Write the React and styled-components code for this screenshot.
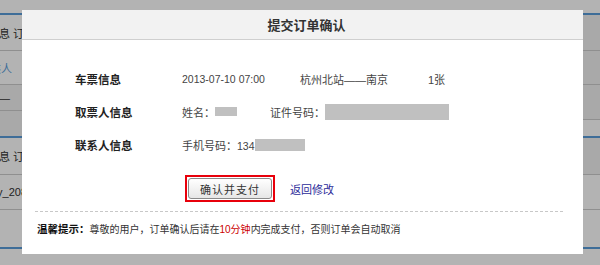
import React from 'react';
import styled, { createGlobalStyle } from 'styled-components';

const GlobalStyle = createGlobalStyle`
  html, body {
    margin: 0;
    padding: 0;
    background: #b3b3b3;
  }
  body {
    font-family: "Liberation Sans", "Noto Sans CJK SC", sans-serif;
    color: #333;
  }
`;

const Page = styled.div`
  display: flex;
  width: 600px;
  height: 265px;
  overflow: hidden;
`;

const Strip = styled.div`
  width: ${p => p.width}px;
  flex-shrink: 0;
  display: flex;
  flex-direction: column;
  overflow: hidden;
`;

const StripRow = styled.div`
  height: ${p => p.h}px;
  flex-shrink: 0;
  box-sizing: border-box;
  border-bottom: ${p => (p.blue ? '2px solid #3e6d98' : '1px solid #8f8f8f')};
  background: ${p => (p.dark ? '#a9a9a9' : '#b3b3b3')};
  display: flex;
  align-items: center;
  white-space: nowrap;
  font-size: 11px;
  color: ${p => (p.link ? '#3e6d98' : '#222')};
  text-indent: ${p => p.indent || 0}px;
`;

const Dialog = styled.div`
  width: 561px;
  height: 244px;
  margin-top: 10px;
  flex-shrink: 0;
  background: #fff;
  display: flex;
  flex-direction: column;
`;

const Header = styled.div`
  height: 29px;
  flex-shrink: 0;
  background: #f2f2f2;
  border-bottom: 1px solid #cfcfcf;
  display: flex;
  align-items: center;
  justify-content: center;
  padding-left: 8px;
  font-size: 13px;
  font-weight: bold;
  color: #333;
`;

const Body = styled.div`
  padding: 22px 0 0 53px;
`;

const Row = styled.div`
  height: 33px;
  display: flex;
  align-items: center;
  font-size: 11px;
  color: #444;
`;

const Label = styled.div`
  width: 107px;
  font-size: 11.5px;
  font-weight: bold;
  color: #222;
`;

const Value = styled.span`
  margin-right: ${p => p.gap || 0}px;
  font-size: ${p => (p.num ? '10.5px' : '11px')};
  white-space: nowrap;
`;

const Masked = styled.span`
  display: inline-block;
  width: ${p => p.w}px;
  height: ${p => p.h}px;
  background: #c0c0c0;
  margin-right: ${p => p.gap || 0}px;
`;

const Actions = styled.div`
  display: flex;
  align-items: center;
  margin: 14px 0 0 163px;
`;

const Outline = styled.div`
  border: 2px solid #e8000b;
  padding: 1px;
`;

const Button = styled.button`
  width: 84px;
  height: 21px;
  box-sizing: border-box;
  border: 1px solid #8a8a8a;
  border-radius: 3px;
  background: linear-gradient(#ffffff, #e6e6e6);
  font-family: inherit;
  font-size: 11px;
  color: #333;
  padding: 0;
  letter-spacing: 1px;
  display: block;
`;

const BackLink = styled.a`
  margin-left: 15px;
  font-size: 11px;
  color: #2b2b99;
  text-decoration: none;
`;

const Divider = styled.div`
  margin: 9px 20px 0 13px;
  border-top: 1px dashed #c8c8c8;
`;

const Tip = styled.div`
  padding: 9px 0 0 15px;
  font-size: 10px;
  color: #333;
  white-space: nowrap;
`;

const TipTitle = styled.b`
  color: #111;
  font-size: 10.5px;
`;

const Hot = styled.span`
  color: #cc0000;
`;

const leftRows = [
  { h: 15, blue: true },
  { h: 36, text: '信息  订单', indent: -12 },
  { h: 34, text: '乘人', indent: -10, link: true },
  { h: 26, text: '——', indent: -12, dark: true },
  { h: 27, blue: true, dark: true },
  { h: 37, text: '信息  订单', indent: -12 },
  { h: 35, text: 'ty_2086', indent: -6 },
  { h: 39, blue: true },
  { h: 30 },
];

const rightRows = [
  { h: 15, blue: true },
  { h: 36, dark: true },
  { h: 34, dark: true },
  { h: 35, dark: true },
  { h: 18, blue: true },
  { h: 37, dark: true },
  { h: 35 },
  { h: 39, blue: true },
  { h: 30 },
];

const App = () => (
  <>
    <GlobalStyle />
    <Page>
      <Strip width={22}>
        {leftRows.map((r, i) => (
          <StripRow key={i} h={r.h} blue={r.blue} dark={r.dark} link={r.link} indent={r.indent}>
            {r.text}
          </StripRow>
        ))}
      </Strip>
      <Dialog>
        <Header>提交订单确认</Header>
        <Body>
          <Row>
            <Label>车票信息</Label>
            <Value num gap={35}>2013-07-10 07:00</Value>
            <Value gap={40}>杭州北站——南京</Value>
            <Value>1张</Value>
          </Row>
          <Row>
            <Label>取票人信息</Label>
            <Value>姓名：</Value>
            <Masked w={22} h={9} gap={33} />
            <Value>证件号码：</Value>
            <Masked w={124} h={16} />
          </Row>
          <Row>
            <Label>联系人信息</Label>
            <Value>手机号码：<Value num>134</Value></Value>
            <Masked w={50} h={12} />
          </Row>
        </Body>
        <Actions>
          <Outline>
            <Button>确认并支付</Button>
          </Outline>
          <BackLink href="#">返回修改</BackLink>
        </Actions>
        <Divider />
        <Tip>
          <TipTitle>温馨提示：</TipTitle>尊敬的用户，订单确认后请在<Hot>10分钟</Hot>内完成支付，否则订单会自动取消
        </Tip>
      </Dialog>
      <Strip width={17}>
        {rightRows.map((r, i) => (
          <StripRow key={i} h={r.h} blue={r.blue} dark={r.dark} />
        ))}
      </Strip>
    </Page>
  </>
);

export default App;
